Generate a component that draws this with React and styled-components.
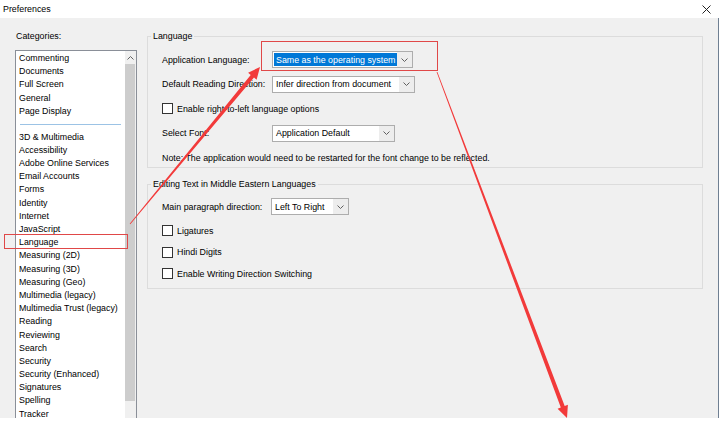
import React from 'react';
import styled, { createGlobalStyle } from 'styled-components';

const GlobalStyle = createGlobalStyle`
  body {
    margin: 0;
    background: #fff;
    font-family: "Liberation Sans", Arial, sans-serif;
    font-size: 8.85px;
    color: #000;
  }
`

const Frame = styled.div`
  position: relative;
  width: 720px;
  height: 435px;
  background: #fff;
  overflow: hidden;
`
const TitleBar = styled.div`
  height: 18px;
  display: flex;
  align-items: center;
  justify-content: space-between;
  padding: 0 9px 0 3px;
  box-sizing: border-box;
  background: #fff;
`
const Body = styled.div`
  width: 718px;
  height: 400px;
  display: flex;
  background: #f0f0f0;
  border-right: 1px solid #6f7f92;
  overflow: hidden;
`
const Sidebar = styled.div`
  width: 137px;
  padding: 12px 0 0 15px;
  box-sizing: border-box;
  flex-shrink: 0;
`
const Caption = styled.div`
  line-height: 12px;
  height: 12px;
  padding-left: 1px;
`
const ListBox = styled.div`
  margin-top: 8px;
  height: 400px;
  border: 1px solid #8a8f98;
  background: #fff;
  display: flex;
`
const Items = styled.div`
  flex: 1;
  padding-top: 1px;
`
const Item = styled.div`
  height: 13.2px;
  line-height: 13.2px;
  padding-left: 3px;
  white-space: nowrap;
`
const Separator = styled.div`
  height: 12.8px;
  display: flex;
  align-items: center;
  padding: 0 4px;
  &::after {
    content: '';
    flex: 1;
    height: 1px;
    background: #9cc3e5;
  }
`
const ScrollBar = styled.div`
  width: 11px;
  background: #f0f0f0;
  display: flex;
  flex-direction: column;
`
const ScrollArrow = styled.div`
  height: 13px;
  display: flex;
  align-items: center;
  justify-content: center;
`
const Thumb = styled.div`
  height: 337px;
  margin: 0 1px 0 0;
  background: #cdcdcd;
`
const Content = styled.div`
  margin-left: 10px;
  padding-top: 12px;
  width: 556px;
`
const Group = styled.fieldset`
  margin: ${p => p.$gap || 0}px 0 0;
  padding: ${p => p.$top}px 0 ${p => p.$bottom}px 14px;
  border: 1px solid #dcdcdc;
  min-width: 0;
  display: flex;
  flex-direction: column;
  gap: ${p => p.$rowGap || 0}px;
`
const Legend = styled.legend`
  margin-left: -11px;
  padding: 0 2px;
  line-height: 12px;
  height: 12px;
`
const Row = styled.div`
  height: ${p => p.$h || 17}px;
  margin-top: ${p => p.$mt || 0}px;
  display: flex;
  align-items: center;
  white-space: nowrap;
`
const Label = styled.span`
  width: ${p => p.$w || 110}px;
  flex-shrink: 0;
`
const Select = styled.div`
  width: ${p => p.$w}px;
  height: 17px;
  box-sizing: border-box;
  border: 1px solid #adadad;
  background: #fff;
  display: flex;
`
const SelectValue = styled.span`
  flex: 1;
  display: flex;
  align-items: center;
  padding-left: 3px;
  ${p => p.$active && `
    margin: 1px 0 1px 1px;
    padding-left: 2px;
    background: #0078d7;
    color: #fff;
  `}
`
const SelectArrow = styled.span`
  width: 15px;
  background: #ededed;
  display: flex;
  align-items: center;
  justify-content: center;
`
const Box = styled.span`
  width: 11px;
  height: 11px;
  box-sizing: border-box;
  border: 1px solid #333;
  background: #fff;
  margin-right: 4px;
  flex-shrink: 0;
`
const Overlay = styled.svg`
  position: absolute;
  left: 0;
  top: 0;
  pointer-events: none;
`

const categories = [
  'Commenting', 'Documents', 'Full Screen', 'General', 'Page Display', '-',
  '3D & Multimedia', 'Accessibility', 'Adobe Online Services', 'Email Accounts', 'Forms',
  'Identity', 'Internet', 'JavaScript', 'Language', 'Measuring (2D)', 'Measuring (3D)',
  'Measuring (Geo)', 'Multimedia (legacy)', 'Multimedia Trust (legacy)', 'Reading',
  'Reviewing', 'Search', 'Security', 'Security (Enhanced)', 'Signatures', 'Spelling', 'Tracker',
]

const Chevron = ({ up }) => (
  <svg width="7" height="4" viewBox="0 0 7 4">
    <path d={up ? 'M0.5 3.5 L3.5 0.5 L6.5 3.5' : 'M0.5 0.5 L3.5 3.5 L6.5 0.5'} fill="none" stroke="#606060" strokeWidth="1" />
  </svg>
)

const Dropdown = ({ w, value, active }) => (
  <Select $w={w}>
    <SelectValue $active={active}>{value}</SelectValue>
    <SelectArrow><Chevron /></SelectArrow>
  </Select>
)

const Check = ({ children }) => (
  <>
    <Box />
    <span>{children}</span>
  </>
)

// tapered annotation arrow: thin at the start, thick near the head
const arrowPoints = (sx, sy, tx, ty) => {
  const len = Math.hypot(tx - sx, ty - sy)
  const dx = (tx - sx) / len, dy = (ty - sy) / len
  const nx = -dy, ny = dx
  const hl = 12, hw = 11, w0 = 0.8, w1 = 4.2
  const bx = tx - dx * hl, by = ty - dy * hl
  const pts = [
    [sx + nx * w0 / 2, sy + ny * w0 / 2],
    [bx + nx * w1 / 2, by + ny * w1 / 2],
    [bx + nx * hw / 2, by + ny * hw / 2],
    [tx, ty],
    [bx - nx * hw / 2, by - ny * hw / 2],
    [bx - nx * w1 / 2, by - ny * w1 / 2],
    [sx - nx * w0 / 2, sy - ny * w0 / 2],
  ]
  return pts.map(p => p.map(v => v.toFixed(1)).join(',')).join(' ')
}

export default function App() {
  return (
    <Frame>
      <GlobalStyle />
      <TitleBar>
        <span>Preferences</span>
        <svg width="9" height="9" viewBox="0 0 9 9">
          <path d="M0.5 0.5 L8.5 8.5 M8.5 0.5 L0.5 8.5" stroke="#222" strokeWidth="1" />
        </svg>
      </TitleBar>
      <Body>
        <Sidebar>
          <Caption>Categories:</Caption>
          <ListBox>
            <Items>
              {categories.map((c, i) => c === '-' ? <Separator key={i} /> : <Item key={i}>{c}</Item>)}
            </Items>
            <ScrollBar>
              <ScrollArrow><Chevron up /></ScrollArrow>
              <Thumb />
            </ScrollBar>
          </ListBox>
        </Sidebar>
        <Content>
          <Group $top={9} $bottom={1} $rowGap={7.5}>
            <Legend>Language</Legend>
            <Row>
              <Label>Application Language:</Label>
              <Dropdown w={141} value="Same as the operating system" active />
            </Row>
            <Row>
              <Label>Default Reading Direction:</Label>
              <Dropdown w={143} value="Infer direction from document" />
            </Row>
            <Row><Check>Enable right-to-left language options</Check></Row>
            <Row>
              <Label>Select Font:</Label>
              <Dropdown w={123} value="Application Default" />
            </Row>
            <Row>Note: The application would need to be restarted for the font change to be reflected.</Row>
          </Group>
          <Group $gap={10} $top={8} $bottom={3}>
            <Legend>Editing Text in Middle Eastern Languages</Legend>
            <Row>
              <Label $w={109}>Main paragraph direction:</Label>
              <Dropdown w={78} value="Left To Right" />
            </Row>
            <Row $h={21.5} $mt={5}><Check>Ligatures</Check></Row>
            <Row $h={21.5}><Check>Hindi Digits</Check></Row>
            <Row $h={21.5}><Check>Enable Writing Direction Switching</Check></Row>
          </Group>
        </Content>
      </Body>
      <Overlay width="720" height="435" viewBox="0 0 720 435">
        <rect x="261.5" y="41.5" width="176" height="29" fill="none" stroke="#e04848" strokeWidth="1" />
        <rect x="4.5" y="234.5" width="123" height="14" fill="none" stroke="#e04848" strokeWidth="1" />
        <polygon points={arrowPoints(130, 224, 260, 67)} fill="#f23a3a" />
        <polygon points={arrowPoints(437, 72, 567, 418)} fill="#f23a3a" />
      </Overlay>
    </Frame>
  )
}
